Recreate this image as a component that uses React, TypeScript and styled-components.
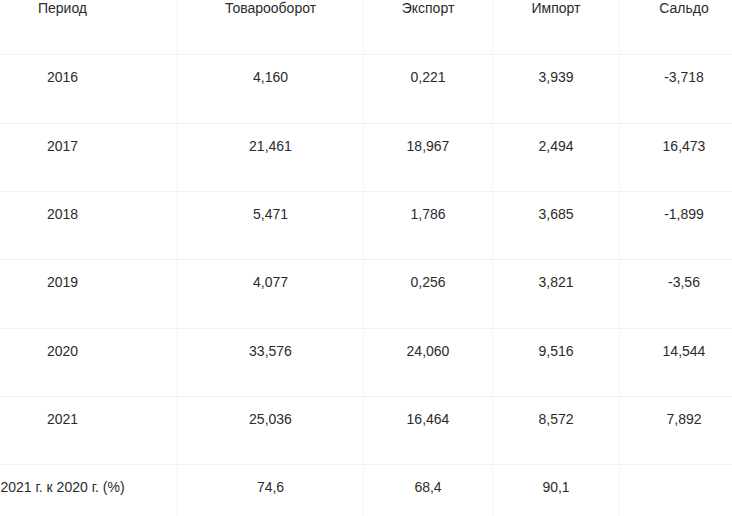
import React from "react";
import styled, { createGlobalStyle } from "styled-components";

const Global = createGlobalStyle`
  html, body { margin: 0; padding: 0; background: #fff; overflow: hidden; }
  body { font-family: "Liberation Sans", Arial, sans-serif; }
`;

const Viewport = styled.div`
  width: 732px;
  height: 516px;
  overflow: hidden;
  background: #fff;
`;

const Table = styled.div`
  display: flex;
  flex-direction: column;
  margin: -14px 0 0 -52px;
  width: 800px;
`;

const Row = styled.div<{ $head?: boolean }>`
  display: grid;
  grid-template-columns: 230px 186px 129px 127px 128px;
  height: 68.33px;
  border-top: ${(p) => (p.$head ? "none" : "1px solid #f1f1f1")};
  box-sizing: border-box;
`;

const Cell = styled.div`
  padding-top: 12px;
  text-align: center;
  font-size: 14px;
  line-height: 20px;
  color: #2b2b2b;
  border-right: 1px solid #f3f3f3;
  white-space: nowrap;
  &:last-child { border-right: none; }
`;

const HeadCell = styled(Cell)`
  padding-top: 12px;
`;

const headers = ["Период", "Товарооборот", "Экспорт", "Импорт", "Сальдо"];
const rows = [
  ["2016", "4,160", "0,221", "3,939", "-3,718"],
  ["2017", "21,461", "18,967", "2,494", "16,473"],
  ["2018", "5,471", "1,786", "3,685", "-1,899"],
  ["2019", "4,077", "0,256", "3,821", "-3,56"],
  ["2020", "33,576", "24,060", "9,516", "14,544"],
  ["2021", "25,036", "16,464", "8,572", "7,892"],
  ["2021 г. к 2020 г. (%)", "74,6", "68,4", "90,1", ""],
];

export default function App() {
  return (
    <Viewport>
      <Global />
      <Table>
        <Row $head>
          {headers.map((h) => (
            <HeadCell key={h}>{h}</HeadCell>
          ))}
        </Row>
        {rows.map((r, i) => (
          <Row key={i}>
            {r.map((c, j) => (
              <Cell key={j}>{c}</Cell>
            ))}
          </Row>
        ))}
      </Table>
    </Viewport>
  );
}
